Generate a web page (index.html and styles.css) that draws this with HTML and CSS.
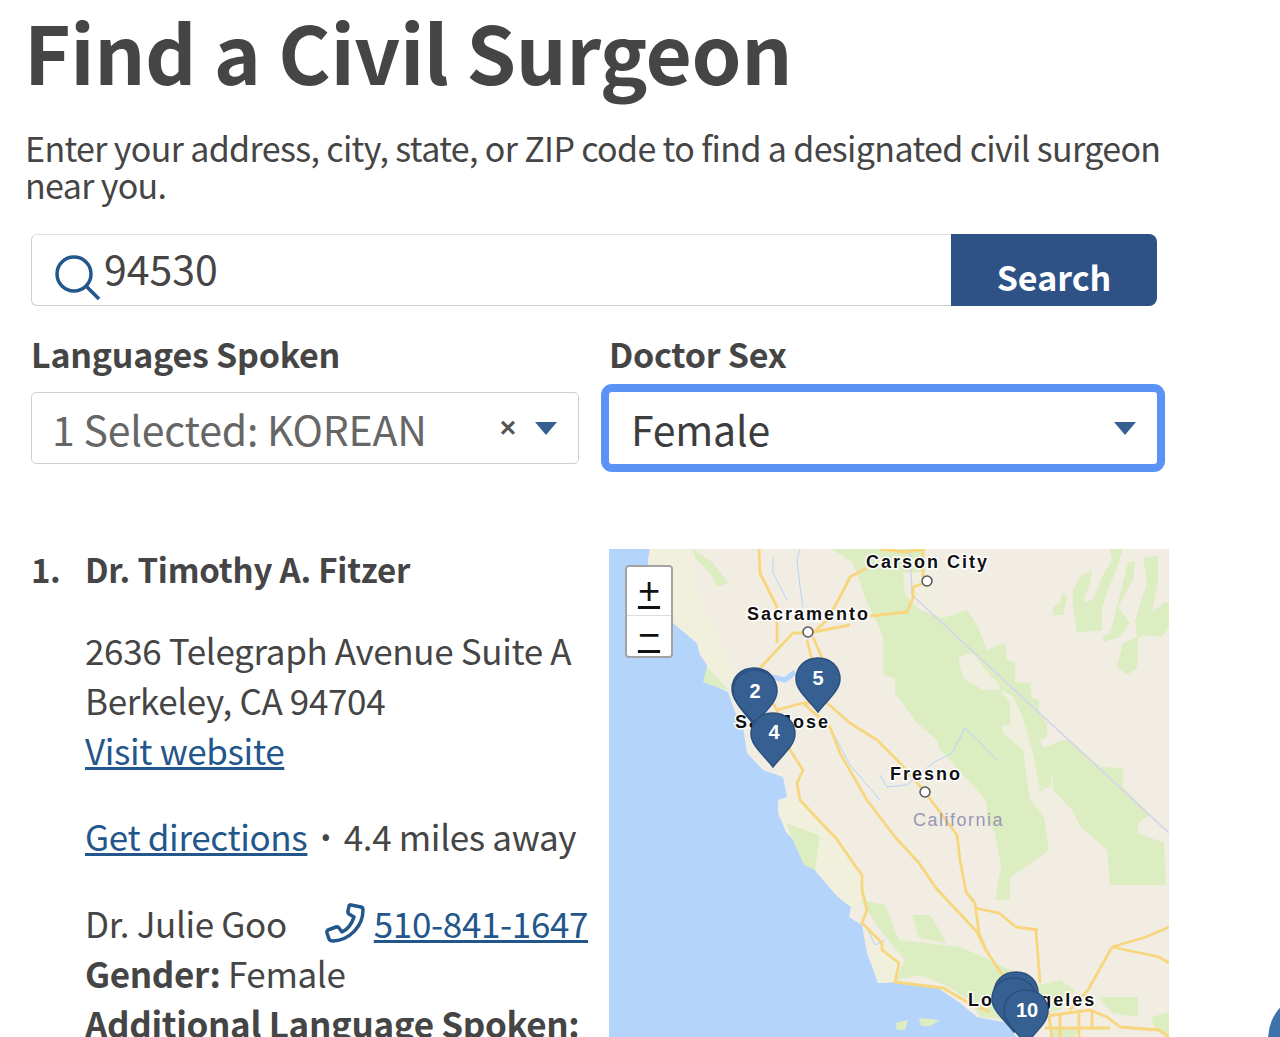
FILE: index.html
```html
<!DOCTYPE html>
<html lang="en">
<head>
<meta charset="utf-8">
<title>Find a Civil Surgeon</title>
<link rel="stylesheet" href="styles.css">
</head>
<body>
<main class="page">
  <h1 class="title">Find a Civil Surgeon</h1>
  <p class="intro">Enter your address, city, state, or ZIP code to find a designated civil surgeon near you.</p>

  <form class="search">
    <div class="search-field">
      <svg class="search-icon" viewBox="0 0 46 46" aria-hidden="true"><circle cx="19" cy="19" r="17"/><path d="M31 31 L44 44"/></svg>
      <span class="search-value">94530</span>
    </div>
    <div class="search-button"><span>Search</span></div>
  </form>

  <div class="filters">
    <div class="filter">
      <div class="filter-label">Languages Spoken</div>
      <div class="select">
        <span class="select-value muted">1 Selected: KOREAN</span>
        <span class="clear">×</span>
        <span class="caret"></span>
      </div>
    </div>
    <div class="filter">
      <div class="filter-label">Doctor Sex</div>
      <div class="select focused">
        <span class="select-value">Female</span>
        <span class="caret"></span>
      </div>
    </div>
  </div>

  <div class="results">
    <ol class="list">
      <li class="item">
        <span class="num">1.</span>
        <div class="detail">
          <div class="name">Dr. Timothy A. Fitzer</div>
          <div class="block">2636 Telegraph Avenue Suite A<br>Berkeley, CA 94704<br><a href="#">Visit website</a></div>
          <div class="block"><a href="#">Get directions</a><span class="dot">·</span>4.4 miles away</div>
          <div class="block contact">
            <div class="doctor"><span>Dr. Julie Goo</span>
              <span class="phone">
                <svg class="phone-icon" viewBox="0 0 40 40" aria-hidden="true"><path d="M26 2 L36 4 Q38 4.500 38 7 C38 23 25 37 8 38 Q5 38 4 36 L2 30 Q1.500 28 3 27 L11 24 Q13 23.500 14 25 L17 29 C22 27 27 21 29 14 L24 11 Q22.500 10 23 8 L24 3 Q24.500 1.500 26 2 Z"/></svg>
                <a href="#">510-841-1647</a>
              </span>
            </div>
            <div><b>Gender:</b> Female</div>
            <div><b>Additional Language Spoken:</b></div>
          </div>
        </div>
      </li>
    </ol>

    <div class="map">
      <svg class="map-canvas" viewBox="609 549 560 488" aria-label="Map of California">
        <rect class="water" x="609" y="549" width="560" height="488"/>
        <path class="land" d="M650 549 L648 560 L650 577 L660 605 L673 623 L697 643 L700 655 L707 665 L706 682 L728 692 L735 712 L743 727 L747 753 L763 770 L783 777 L787 797 L778 800 L778 813 L786 832 L804 850 L817 873 L838 897 L851 907 L849 917 L862 925 L867 953 L878 983 L895 982 L938 988 L960 1003 L977 1017 L1008 1023 L1016 1037 L1169 1037 L1169 549 Z"/>
        <g class="pale">
          <path d="M650 549 L648 560 L650 577 L660 605 L673 623 L697 643 L707 665 L740 690 L720 640 L700 600 L690 549 Z"/>
          <path d="M778 800 L786 832 L804 850 L817 873 L838 897 L851 907 L870 900 L850 850 L820 820 L800 800 Z"/>
          <path d="M878 983 L870 950 L880 940 L900 960 L895 982 Z"/>
        </g>
        <g class="green">
          <path d="M693 549 L713 563 L728 583 L717 587 L710 573 L695 558 Z"/>
          <path d="M707 667 L716 676 L728 690 L714 686 L703 682 Z"/>
          <path d="M832 549 L923 549 L923 600 L943 618 L967 610 L978 627 L987 650 L1005 643 L1007 660 L1015 662 L1015 682 L1030 683 L1032 698 L1039 700 L1039 713 L1047 723 L1047 737 L1040 740 L1043 748 L1063 740 L1070 740 L1100 767 L1123 768 L1123 787 L1150 815 L1138 823 L1138 833 L1164 843 L1166 885 L1110 885 L1107 850 L1081 827 L1072 810 L1053 790 L1053 773 L1050 788 L1043 788 L1044 817 L1049 850 L1010 878 L1010 900 L995 900 L1001 867 L995 833 L987 817 L987 803 L977 790 L938 747 L937 740 L917 723 L895 693 L895 678 L883 675 L883 637 L877 623 L866 600 L853 563 Z"/>
          <path d="M1062 592 L1067 598 L1063 615 L1053 615 L1053 607 L1060 602 Z"/>
          <path d="M1073 590 L1080 577 L1092 570 L1090 583 L1083 602 L1093 600 L1102 577 L1112 560 L1110 549 L1123 549 L1118 565 L1108 590 L1102 607 L1102 630 L1077 633 L1073 607 Z"/>
          <path d="M1128 562 L1135 562 L1133 580 L1118 607 L1130 623 L1120 637 L1103 642 L1103 637 L1110 633 L1117 607 Z"/>
          <path d="M1143 558 L1158 556 L1158 583 L1152 612 L1165 602 L1169 603 L1169 627 L1162 637 L1143 635 L1138 638 L1137 668 L1127 675 L1117 667 L1123 643 L1137 637 L1135 620 L1147 583 Z"/>
          <path d="M786 823 L820 836 L815 870 L804 865 L795 845 Z"/>
          <path d="M912 915 L930 915 L947 943 L919 938 Z"/>
          <path d="M860 900 L885 905 L899 940 L960 947 L990 960 L1010 970 L1040 985 L1060 980 L1075 990 L1060 1010 L1010 1020 L980 1017 L970 1000 L945 985 L920 975 L895 980 L905 960 L880 930 Z"/>
          <path d="M1099 997 L1138 997 L1138 1017 L1112 1013 Z"/>
          <path d="M1151 1017 L1169 1012 L1169 1035 L1155 1030 Z"/>
          <path d="M1050 1027 L1080 1027 L1075 1037 L1050 1037 Z"/>
          <path d="M895 1023 L908 1020 L905 1030 L897 1030 Z"/>
          <path d="M919 1018 L940 1020 L930 1026 L921 1026 Z"/>
        </g>
        <g class="clearing">
          <path d="M903 573 L925 572 L947 600 L943 618 L920 610 L905 595 Z"/>
          <path d="M958 657 L973 653 L985 670 L1000 685 L1000 690 L983 690 L963 678 Z"/>
          <path d="M1000 690 L1012 695 L1022 715 L1032 750 L1040 790 L1050 800 L1046 820 L1030 800 L1023 750 L1003 733 L1003 725 L1010 725 L1010 703 Z"/>
        </g>
        <g class="rivers">
          <path d="M800 549 L797 560 L800 587 L803 607"/>
          <path d="M773 557 L773 573 L787 600"/>
          <path d="M997 760 L980 742 L965 728 L952 753 L933 763 L907 785 L887 787 L880 775"/>
          <path d="M830 727 L850 765 L880 800"/>
          <path d="M868 930 L875 945 L885 940"/>
        </g>
        <path class="delta" d="M772 677 L785 680 L795 672"/>
        <path class="border" d="M910 549 L912 595 L1169 833"/>
        <g class="roads">
          <path d="M759 549 L760 573 L777 607 L777 643"/>
          <path d="M760 668 L793 633 L808 633 L850 625"/>
          <path d="M807 640 L812 660 M813 637 L823 660 L827 703 L850 723 L877 740 L900 763 L925 792 L957 835 L960 860 L966 892 L975 903 L979 933 L986 950 L997 967 L1010 985"/>
          <path d="M867 568 L850 577 L840 597 L827 620 L813 633"/>
          <path d="M870 616 L907 612 L913 598 L913 587 L927 582"/>
          <path d="M923 549 L923 577"/>
          <path d="M880 549 L905 552 M905 552 L925 549"/>
          <path d="M773 703 L777 710 L803 703 L827 703"/>
          <path d="M777 710 L790 750 L803 770 L797 783 L800 800 L828 830 L836 838 L856 867 L862 875 L862 890 L867 910 L862 923 L882 943 L882 950 L899 963 L895 982 L943 988 L969 1003 L990 1012"/>
          <path d="M803 703 L830 727 L840 753 L867 800 L895 837 L919 863 L936 888 L977 932 L986 950"/>
          <path d="M975 908 L999 913 L1016 927 L1038 930"/>
          <path d="M1036 930 L1040 983"/>
          <path d="M1112 947 L1088 990 L1070 1010"/>
          <path d="M1112 947 L1146 937 L1169 927"/>
          <path d="M1112 947 L1159 957 L1169 963"/>
          <path d="M1040 1017 L1090 1010 L1107 1017 L1120 1027 L1159 1030 L1169 1037"/>
          <path d="M1048 1010 L1052 1037 M1060 1015 L1060 1037 M1079 1010 L1079 1037 M1092 1010 L1092 1030 M1045 1028 L1110 1028"/>
        </g>
        <g class="dots">
          <circle cx="808" cy="632" r="5"/>
          <circle cx="927" cy="581" r="5"/>
          <circle cx="925" cy="792" r="5"/>
        </g>
        <g class="labels">
          <text x="866" y="568">Carson City</text>
          <text x="747" y="620">Sacramento</text>
          <text x="735" y="728">San Jose</text>
          <text x="890" y="780">Fresno</text>
          <text x="968" y="1006">Los Angeles</text>
        </g>
        <text class="state" x="913" y="826">California</text>

        <g class="pins">
          <path transform="translate(754 668)" d="M0 0 C13 0 22 9 22 21 C22 33 8 46 0 57 C-8 46 -22 33 -22 21 C-22 9 -13 0 0 0 Z"/>
          <path transform="translate(818 658)" d="M0 0 C13 0 22 9 22 21 C22 33 8 43 0 54 C-8 43 -22 33 -22 21 C-22 9 -13 0 0 0 Z"/>
          <path transform="translate(755 670)" d="M0 0 C13 0 22 9 22 21 C22 33 8 43 0 54 C-8 43 -22 33 -22 21 C-22 9 -13 0 0 0 Z"/>
          <path transform="translate(773 713)" d="M0 0 C13 0 22 9 22 21 C22 33 8 43 0 54 C-8 43 -22 33 -22 21 C-22 9 -13 0 0 0 Z"/>
          <path transform="translate(1016 972)" d="M0 0 C13 0 22 9 22 21 C22 33 8 43 0 54 C-8 43 -22 33 -22 21 C-22 9 -13 0 0 0 Z"/>
          <path transform="translate(1014 978)" d="M0 0 C13 0 22 9 22 21 C22 33 8 43 0 54 C-8 43 -22 33 -22 21 C-22 9 -13 0 0 0 Z"/>
          <path transform="translate(1026 990)" d="M0 0 C13 0 22 9 22 21 C22 33 8 43 0 54 C-8 43 -22 33 -22 21 C-22 9 -13 0 0 0 Z"/>
        </g>
        <g class="pin-nums">
          <text x="755" y="698">2</text>
          <text x="818" y="685">5</text>
          <text x="774" y="739">4</text>
          <text x="1027" y="1017">10</text>
        </g>
      </svg>
      <div class="zoom">
        <a href="#" class="zoom-btn">+</a>
        <a href="#" class="zoom-btn">−</a>
      </div>
    </div>
  </div>
  <div class="help"></div>
</main>
</body>
</html>
```
FILE: styles.css
```css
* { box-sizing: border-box; }
html, body { margin: 0; padding: 0; background: #fff; }
body {
  font-family: "Noto Sans CJK KR", "Noto Sans CJK SC", "Noto Sans", sans-serif;
  color: #454545;
}
.page {
  position: relative;
  width: 1280px;
  height: 1037px;
  overflow: hidden;
  padding-left: 31px;
}
.title {
  margin: 0 0 0 -7px;
  font-size: 80px;
  line-height: 100px;
  font-weight: 700;
  letter-spacing: -0.450px;
  color: #454545;
  white-space: nowrap;
}
.intro {
  margin: 29px 0 0 -6px;
  width: 1150px;
  font-size: 34px;
  line-height: 37px;
  letter-spacing: -0.650px;
}
.search {
  display: flex;
  width: 1126px;
  height: 72px;
  margin-top: 31px;
}
.search-field {
  flex: 1;
  display: flex;
  border: 1px solid #cfcfcf;
  border-top-color: #e0e0e0;
  border-right: 0;
  border-radius: 6px 0 0 6px;
  padding-left: 23px;
}
.search-icon {
  width: 46px;
  height: 46px;
  margin-top: 20px;
  fill: none;
  stroke: #23578b;
  stroke-width: 3.500;
}
.search-value {
  margin-left: 3px;
  font-size: 41px;
  line-height: 64px;
}
.search-button {
  width: 206px;
  background: #2e5286;
  border-radius: 0 8px 8px 0;
  color: #fff;
  font-size: 34px;
  font-weight: 700;
  text-align: center;
  line-height: 86px;
}
.filters {
  display: flex;
  gap: 30px;
  width: 1126px;
  margin-top: 27px;
}
.filter { flex: 0 0 548px; }
.filter-label {
  font-size: 34px;
  line-height: 42px;
  font-weight: 700;
  letter-spacing: -0.250px;
}
.select {
  display: flex;
  align-items: center;
  height: 72px;
  margin-top: 17px;
  padding: 0 21px 0 20px;
  border: 1px solid #cfcfcf;
  border-radius: 5px;
  background: #fff;
}
.select.focused {
  border: 0;
  border-radius: 3px;
  outline: 8px solid #5b92f5;
  outline-offset: 0;
  padding-left: 22px;
  padding-right: 21px;
}
.select-value {
  flex: 1;
  font-size: 41px;
  line-height: 66px;
  letter-spacing: -0.200px;
  color: #3d3d3d;
}
.select-value.muted { color: #666; }
.clear {
  font-family: "Liberation Sans", Arial, sans-serif;
  font-size: 28px;
  font-weight: 700;
  line-height: 72px;
  color: #555;
  margin-right: 19px;
}
.caret {
  width: 0;
  height: 0;
  border-left: 11px solid transparent;
  border-right: 11px solid transparent;
  border-top: 13px solid #366092;
}
.results {
  display: flex;
  margin-top: 85px;
}
.list {
  list-style: none;
  margin: 0;
  padding: 0;
  width: 578px;
  flex: none;
  font-size: 35px;
  line-height: 50px;
  letter-spacing: -0.350px;
}
.item { display: flex; }
.num {
  flex: 0 0 54px;
  font-size: 33px;
  font-weight: 700;
  line-height: 40px;
}
.detail { width: 524px; }
.name {
  font-size: 33px;
  font-weight: 700;
  line-height: 40px;
  letter-spacing: -0.200px;
  margin-bottom: 2px;
}
.block { margin-top: 36px; }
.block.contact { margin-top: 37px; }
a { color: #23578b; }
.dot { margin: 0 8px; font-weight: 700; }
.doctor { display: flex; gap: 38px; white-space: nowrap; }
.phone { display: inline-flex; align-items: center; gap: 9px; }
.phone-icon {
  width: 40px;
  height: 40px;
  fill: none;
  stroke: #23578b;
  stroke-width: 3.500;
  stroke-linejoin: round;
}
.map {
  position: relative;
  width: 560px;
  height: 488px;
  flex: none;
}
.map-canvas { display: block; width: 560px; height: 488px; }
.water { fill: #b4d4fb; }
.land { fill: #f1ede3; }
.pale path { fill: #f0f0dc; }
.green path { fill: #dcedc1; }
.clearing path { fill: #f0efdf; }
.rivers path { fill: none; stroke: #b4d4fb; stroke-width: 1; }
.delta { fill: none; stroke: #b4d4fb; stroke-width: 5; }
.border { fill: none; stroke: #d4d2f0; stroke-width: 1.500; }
.roads path {
  fill: none;
  stroke: #f8d67e;
  stroke-width: 2.800;
  stroke-linejoin: round;
}
.dots circle { fill: #fff; stroke: #555; stroke-width: 1.500; }
.labels text {
  font-family: "Liberation Sans", Arial, sans-serif;
  font-size: 18px;
  font-weight: 700;
  letter-spacing: 2px;
  fill: #111;
  stroke: #fff;
  stroke-width: 3px;
  paint-order: stroke;
}
.state {
  font-family: "Liberation Sans", Arial, sans-serif;
  font-size: 18px;
  letter-spacing: 1.500px;
  fill: #9b97b3;
}
.pins path { fill: #366092; stroke: #2b4f7e; stroke-width: 1.500; }
.pin-nums text {
  font-family: "Liberation Sans", Arial, sans-serif;
  font-size: 20px;
  font-weight: 700;
  fill: #fff;
  text-anchor: middle;
}
.zoom {
  position: absolute;
  left: 16px;
  top: 16px;
  width: 48px;
  height: 93px;
  display: flex;
  flex-direction: column;
  background: #fff;
  border: 2px solid #a3a3a3;
  border-radius: 4px;
}
.zoom-btn {
  flex: 1;
  text-align: center;
  font-family: "Liberation Sans", Arial, sans-serif;
  font-size: 38px;
  line-height: 48px;
  color: #111;
}
.zoom-btn + .zoom-btn {
  border-top: 1px solid #ddd;
  line-height: 38px;
}
.help {
  position: absolute;
  left: 1268px;
  top: 990px;
  width: 100px;
  height: 100px;
  border: 12px solid #3e72ad;
  border-radius: 50%;
}
```
